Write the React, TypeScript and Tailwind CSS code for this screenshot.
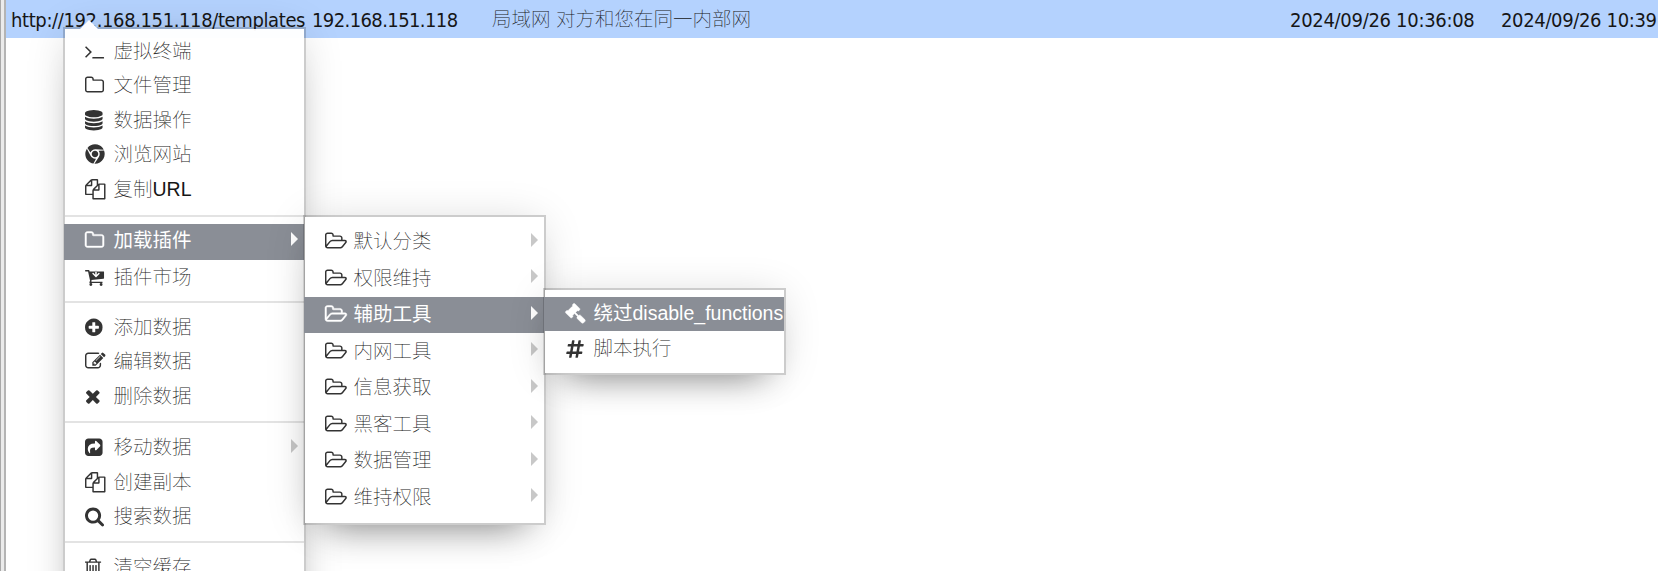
import type { ReactNode } from "react";
import { FaChrome, FaHashtag } from "react-icons/fa";

type Glyph = { x?: number; w: number; d: string };

const disc = "q237 0 443-43t325-127v170q0 69-103 128t-280 93.5-385 34.5-385-34.5-280-93.5-103-128v-170q119 84 325 127t443 43z";
const bar = "q0 14-9 23t-23 9h-64q-14 0-23-9t-9-23v-576q0-14 9-23t23-9h64q14 0 23 9t9 23z";

const glyphs: Record<string, Glyph> = {
  terminal: {
    x: 64, w: 1664,
    d: "M649 983l-466 466q-10 10-23 10t-23-10l-50-50q-10-10-10-23t10-23l393-393-393-393q-10-10-10-23t10-23l50-50q10-10 23-10t23 10l466 466q10 10 10 23t-10 23zm1079 457v64q0 14-9 23t-23 9h-960q-14 0-23-9t-9-23v-64q0-14 9-23t23-9h960q14 0 23 9t9 23z",
  },
  folder: {
    w: 1664,
    d: "M1536 1312v-704q0-40-28-68t-68-28h-704q-40 0-68-28t-28-68v-64q0-40-28-68t-68-28h-320q-40 0-68 28t-28 68v960q0 40 28 68t68 28h1216q40 0 68-28t28-68zm128-704v704q0 92-66 158t-158 66h-1216q-92 0-158-66t-66-158v-960q0-92 66-158t158-66h320q92 0 158 66t66 158v32h672q92 0 158 66t66 158z",
  },
  folderOpen: {
    x: 64, w: 1920,
    d: "M1845 931q0-35-53-35h-1088q-40 0-85.5 21.5t-71.5 52.5l-294 363q-18 24-18 40 0 35 53 35h1088q40 0 86-22t71-53l294-363q18-22 18-39zm-1141-163h768v-160q0-40-28-68t-68-28h-576q-40 0-68-28t-28-68v-64q0-40-28-68t-68-28h-320q-40 0-68 28t-28 68v853l256-315q44-53 116-87.5t140-34.5zm1269 163q0 62-46 120l-295 363q-43 53-116 87.5t-140 34.5h-1088q-92 0-158-66t-66-158v-960q0-92 66-158t158-66h320q92 0 158 66t66 158v32h544q92 0 158 66t66 158v160h192q54 0 99 24.5t67 70.5q15 32 15 68z",
  },
  database: {
    x: 128, w: 1536,
    d: `M896 768${disc}m0 768${disc}m0-384${disc}m0-1152q208 0 385 34.5t280 93.5 103 128v128q0 69-103 128t-280 93.5-385 34.5-385-34.5-280-93.5-103-128v-128q0-69 103-128t280-93.5 385-34.5z`,
  },
  files: {
    w: 1792,
    d: "M1696 384q40 0 68 28t28 68v1216q0 40-28 68t-68 28h-960q-40 0-68-28t-28-68v-288h-544q-40 0-68-28t-28-68v-672q0-40 20-88t48-76l408-408q28-28 76-48t88-20h416q40 0 68 28t28 68v328q68-40 128-40h416zm-544 213l-299 299h299v-299zm-640-384l-299 299h299v-299zm196 647l316-316v-416h-384v416q0 40-28 68t-68 28h-416v640h512v-256q0-40 20-88t48-76zm956 804v-1152h-384v416q0 40-28 68t-68 28h-416v640h896z",
  },
  cart: {
    w: 1664,
    d: "M1280 576q0-26-19-45t-45-19-45 19l-147 146v-293q0-26-19-45t-45-19-45 19-19 45v293l-147-146q-19-19-45-19t-45 19-19 45 19 45l256 256q19 19 45 19t45-19l256-256q19-19 19-45zM640 1536a128 128 0 1 1-256 0a128 128 0 1 1 256 0zM1536 1536a128 128 0 1 1-256 0a128 128 0 1 1 256 0zM1664 320v640q0 24-16 42.5t-41 21.5l-1044 122q1 7 4.5 21.5t6 26.5 2.5 22q0 16-24 64h920q26 0 45 19t19 45-19 45-45 19h-1024q-26 0-45-19t-19-45q0-14 11-39.5t29.5-59.5 20.5-38l-177-823h-204q-26 0-45-19t-19-45 19-45 45-19h256q16 0 28.5 6.5t20 15.5 13 24.5 7.5 26.5 5.5 29.5 4.5 25.5h1201q26 0 45 19t19 45z",
  },
  plus: {
    x: 128, w: 1536,
    d: "M1344 960v-128q0-26-19-45t-45-19h-256v-256q0-26-19-45t-45-19h-128q-26 0-45 19t-19 45v256h-256q-26 0-45 19t-19 45v128q0 26 19 45t45 19h256v256q0 26 19 45t45 19h128q26 0 45-19t19-45v-256h256q26 0 45-19t19-45zm320-64q0 209-103 385.5t-279.5 279.5-385.5 103-385.5-103-279.5-279.5-103-385.5 103-385.5 279.5-279.5 385.5-103 385.5 103 279.5 279.5 103 385.5z",
  },
  edit: {
    w: 1792,
    d: "M888 1184l116-116-152-152-116 116v56h96v96h56zm440-720q-16-16-33 1l-350 350q-17 17-1 33t33-1l350-350q17-17 1-33zm80 594v190q0 119-84.5 203.5t-203.5 84.5h-832q-119 0-203.5-84.5t-84.5-203.5v-832q0-119 84.5-203.5t203.5-84.5h832q63 0 117 25 15 7 18 23 3 17-9 29l-49 49q-14 14-32 8-23-6-45-6h-832q-66 0-113 47t-47 113v832q0 66 47 113t113 47h832q66 0 113-47t47-113v-126q0-13 9-22l64-64q15-15 35-7t20 29zm-96-738l288 288-672 672h-288v-288zm444 132l-92 92-288-288 92-92q28-28 68-28t68 28l152 152q28 28 28 68t-28 68z",
  },
  times: {
    x: 212, w: 1408,
    d: "M1490 1322q0 40-28 68l-136 136q-28 28-68 28t-68-28l-294-294-294 294q-28 28-68 28t-68-28l-136-136q-28-28-28-68t28-68l294-294-294-294q-28-28-28-68t28-68l136-136q28-28 68-28t68 28l294 294 294-294q28-28 68-28t68 28l136 136q28 28 28 68t-28 68l-294 294 294 294q28 28 28 68z",
  },
  share: {
    w: 1536,
    d: "M288 128h960q119 0 203.5 84.5t84.5 203.5v960q0 119-84.5 203.5t-203.5 84.5h-960q-119 0-203.5-84.5t-84.5-203.5v-960q0-119 84.5-203.5t203.5-84.5zM1322 685l-338-338q-19-20-46-20-66 0-66 64v185q-330 0-480 130-150 125-150 350 0 165 140 350 20 25 45 18 26-8 22-36-38-300 45-380 90-95 378-95v192q0 64 66 64 26 0 46-20l338-338q38-63 0-126z",
  },
  search: {
    x: 64, w: 1664,
    d: "M1216 832q0-185-131.5-316.5t-316.5-131.5-316.5 131.5-131.5 316.5 131.5 316.5 316.5 131.5 316.5-131.5 131.5-316.5zm512 832q0 52-38 90t-90 38q-54 0-90-38l-343-342q-179 124-399 124-143 0-273.5-55.5t-225-150-150-225-55.5-273.5 55.5-273.5 150-225 225-150 273.5-55.5 273.5 55.5 225 150 150 225 55.5 273.5q0 220-124 399l343 343q37 37 37 90z",
  },
  trash: {
    x: 192, w: 1408,
    d: `M704 736v576${bar}M960 736v576${bar}M1216 736v576${bar}M1344 1460v-948h-896v948q0 22 7 40.5t14.5 27 10.5 8.5h832q3 0 10.5-8.5t14.5-27 7-40.5zm-672-1076h448l-48-117q-7-9-17-11h-317q-10 2-17 11zm928 32v64q0 14-9 23t-23 9h-96v948q0 83-47 143.5t-113 60.5h-832q-66 0-113-58.5t-47-141.5v-952h-96q-14 0-23-9t-9-23v-64q0-14 9-23t23-9h309l70-167q15-37 54-63t79-26h320q40 0 79 26t54 63l70 167h309q14 0 23 9t9 23z`,
  },
  gavel: {
    w: 1792,
    d: "M1771 1536q0 53-37 90l-107 108q-39 37-91 37-53 0-90-37l-363-364q-38-36-38-90 0-53 43-96l-256-256-126 126q-14 14-34 14t-34-14q2 2 12.5 12t12.5 13 10 11.5 10 13.5 6 13.5 5.5 16.5 1.5 18q0 38-28 68-3 3-16.5 18t-19 20.5-18.5 16.5-22 15.5-22 9-26 4.5q-40 0-68-28l-408-408q-28-28-28-68 0-13 4.5-26t9-22 15.5-22 16.5-18.5 20.5-19 18-16.5q30-28 68-28 10 0 18 1.5t16.5 5.5 13.5 6 13.5 10 11.5 10 13 12.5 12 12.5q-14-14-14-34t14-34l348-348q14-14 34-14t34 14q-2-2-12.5-12t-12.5-13-10-11.5-10-13.5-6-13.5-5.5-16.5-1.5-18q0-38 28-68 3-3 16.5-18t19-20.5 18.5-16.5 22-15.5 22-9 26-4.5q40 0 68 28l408 408q28 28 28 68 0 13-4.5 26t-9 22-15.5 22-16.5 18.5-20.5 19-18 16.5q-30 28-68 28-10 0-18-1.5t-16.5-5.5-13.5-6-13.5-10-11.5-10-13-12.5-12-12.5q14 14 14 34t-14 34l-126 126 256 256q43-43 96-43 52 0 91 37l363 363q37 39 37 91z",
  },
};

function Icon({ name, active }: { name: string; active?: boolean }) {
  if (name === "chrome") return <FaChrome className="size-5" />;
  if (name === "hash") return <FaHashtag className="size-5" />;
  const g = glyphs[name];
  return (
    <svg
      viewBox={`${g.x ?? 0} 0 ${g.w} 1792`}
      className="h-[20.5px] w-auto overflow-visible"
      fill="currentColor"
      stroke="currentColor"
      strokeWidth={active ? 40 : 0}
    >
      <path d={g.d} fillRule={name === "database" ? "nonzero" : "evenodd"} />
    </svg>
  );
}

type RowProps = { icon: string; label: string; sub?: boolean; active?: boolean; height?: string };

function Row({ icon, label, sub, active, height = "h-[34.5px]" }: RowProps) {
  return (
    <div
      className={`flex shrink-0 items-center pr-[6px] ${height} ${
        active ? "-ml-px bg-[#8a8e96] pl-[21px] text-white" : "pl-[20px] text-[#333333]"
      }`}
    >
      <span className="flex w-[28.5px] shrink-0 items-center pb-px">
        <Icon name={icon} active={active} />
      </span>
      <span className={`whitespace-nowrap ${active ? "" : "font-thin text-[#161616]"}`}>{label}</span>
      {sub && (
        <svg viewBox="0 0 7 14" className={`mb-[4px] ml-auto h-[14px] w-[7px] ${active ? "text-white" : "text-[#c8c8c8]"}`}>
          <path d="M0 0L7 7L0 14Z" fill="currentColor" />
        </svg>
      )}
    </div>
  );
}

function Separator({ space }: { space: string }) {
  return <div className={`h-[2px] shrink-0 bg-[#e3e3e3] ${space}`} />;
}

function Menu({ place, children }: { place: string; children: ReactNode }) {
  return (
    <div
      className={`absolute flex w-[243px] flex-col border-2 border-black/20 bg-white/97 bg-clip-padding shadow-[0_24px_36px_-24px_rgba(0,0,0,0.45),0_2px_40px_-6px_rgba(0,0,0,0.17)] ${place}`}
    >
      {children}
    </div>
  );
}

const categories = ["默认分类", "权限维持", "辅助工具", "内网工具", "信息获取", "黑客工具", "数据管理", "维持权限"];

export default function App() {
  return (
    <div className="relative flex h-[571px] w-[1658px] overflow-hidden bg-white font-['Liberation_Sans','Noto_Sans_CJK_SC',sans-serif] text-[19.5px] leading-none">
      <div className="w-[6px] shrink-0 border-r-2 border-l border-r-[#b4b4b4] border-l-[#a8a8a8] bg-[#ebebeb]" />
      <div className="flex h-[38px] min-w-0 flex-1 items-center overflow-hidden bg-[#b4d2fe] pt-px pl-[5px] font-['DejaVu_Sans_Condensed','Noto_Sans_CJK_SC',sans-serif] text-[20px] whitespace-nowrap text-[#161616]">
        <span className="w-[301px] shrink-0 tracking-[-0.38px]">http://192.168.151.118/templates</span>
        <span className="w-[180px] shrink-0 tracking-[-0.6px]">192.168.151.118</span>
        <span className="w-[798px] shrink-0 font-['Liberation_Sans','Noto_Sans_CJK_SC',sans-serif] text-[19.5px] font-thin">局域网 对方和您在同一内部网</span>
        <span className="w-[211px] shrink-0 tracking-[-0.3px]">2024/09/26 10:36:08</span>
        <span className="shrink-0 tracking-[-0.35px]">2024/09/26 10:39</span>
      </div>

      <Menu place="top-[27px] left-[63px] h-[620px] pt-[5px]">
        <svg viewBox="0 0 20 10" className="absolute -top-[9px] left-[14px] h-[10px] w-5">
          <path d="M0 10L10 0L20 10Z" fill="#fbfcff" />
        </svg>
        <Row icon="terminal" label="虚拟终端" />
        <Row icon="folder" label="文件管理" />
        <Row icon="database" label="数据操作" />
        <Row icon="chrome" label="浏览网站" />
        <Row icon="files" label="复制URL" />
        <Separator space="mt-[8.5px] mb-[7px]" />
        <Row icon="folder" label="加载插件" sub active height="h-9 pb-[2px]" />
        <Row icon="cart" label="插件市场" />
        <Separator space="mt-[6px] mb-[7.5px]" />
        <Row icon="plus" label="添加数据" />
        <Row icon="edit" label="编辑数据" />
        <Row icon="times" label="删除数据" />
        <Separator space="mt-[7.5px] mb-[7.5px]" />
        <Row icon="share" label="移动数据" sub />
        <Row icon="files" label="创建副本" />
        <Row icon="search" label="搜索数据" />
        <Separator space="mt-[7px] mb-[7.5px]" />
        <Row icon="trash" label="清空缓存" />
      </Menu>

      <Menu place="top-[215px] left-[303px] h-[310px] pt-[6.6px]">
        {categories.map((label) => (
          <Row key={label} icon="folderOpen" label={label} sub active={label === "辅助工具"} height="h-[36.5px]" />
        ))}
      </Menu>

      <Menu place="top-[288px] left-[543px] h-[87px] pt-[7px]">
        <Row icon="gavel" label="绕过disable_functions" active height="h-[34px]" />
        <Row icon="hash" label="脚本执行" height="h-9" />
      </Menu>
    </div>
  );
}
